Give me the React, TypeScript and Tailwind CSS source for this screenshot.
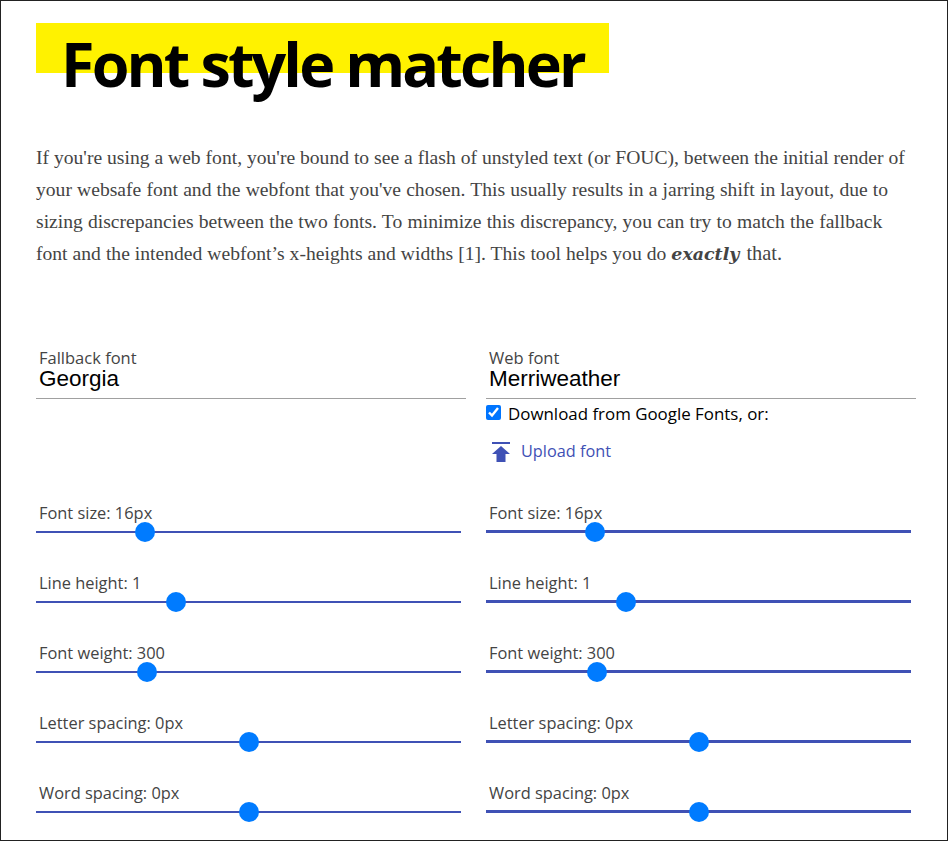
const sans = "font-['Open_Sans','Noto_Sans',sans-serif]";

const Slider = ({ label, thumb, thick }: { label: string; thumb: number; thick?: boolean }) => (
    <div className="h-[70px] w-[425px]">
        <div className={`${sans} h-[25px] pl-[3px] text-[16.4px] leading-[14px] text-[#444444]`}>{label}</div>
        <div className={`relative ${thick ? "mt-[-1px] h-[3px]" : "h-[2px]"} bg-[#3f51b5]`}>
            <div
                className={`absolute ${thick ? "top-[-8.5px]" : "top-[-9px]"} h-[20px] w-[20px] rounded-full bg-[#007bff]`}
                style={{ left: thumb }}
            />
        </div>
    </div>
)

const FontName = ({ label, value }: { label: string; value: string }) => (
    <div className="h-[51px] border-b border-[#a0a0a0] pl-[3px] pt-[1px]">
        <div className={`${sans} h-[18px] text-[16.5px] leading-[18px] text-[#444444]`}>{label}</div>
        <div className="font-['Liberation_Sans',sans-serif] text-[22.5px] leading-[24px] text-black">{value}</div>
    </div>
)

export default function App() {
    return (
        <div className="h-[841px] w-[948px] overflow-hidden border border-[#222222] bg-white pl-[35px] pt-[22px]">
            <div className="h-[50px] w-[573px] bg-[#fff200]">
                <h1 className={`${sans} pl-[25px] text-[61px] font-bold leading-[82px] tracking-[-2.85px] text-black`}>Font style matcher</h1>
            </div>
            <p className="mt-[69px] w-[900px] font-['Liberation_Serif',serif] text-[19.6px] leading-[32px] text-[#444444]">
                <span className="[word-spacing:0.02px]">If you're using a web font, you're bound to see a flash of unstyled text (or FOUC), between the initial render of</span><br />
                <span className="[word-spacing:0.26px]">your websafe font and the webfont that you've chosen. This usually results in a jarring shift in layout, due to</span><br />
                <span className="[word-spacing:0.3px]">sizing discrepancies between the two fonts. To minimize this discrepancy, you can try to match the fallback</span><br />
                <span className="[word-spacing:0.12px]">font and the intended webfont’s x-heights and widths [1]. This tool helps you do <b className="mr-[2px] font-['DejaVu_Serif',serif] text-[17.4px] italic leading-[16px]">exactly</b> <span className="text-[20.4px] leading-[16px]">that.</span></span>
            </p>
            <div className="mt-[78px] flex gap-[20px]">
                <div className="w-[430px]">
                    <FontName label="Fallback font" value="Georgia" />
                    <div className="h-[107px]" />
                    <Slider label="Font size: 16px" thumb={99} />
                    <Slider label="Line height: 1" thumb={130} />
                    <Slider label="Font weight: 300" thumb={101} />
                    <Slider label="Letter spacing: 0px" thumb={203} />
                    <Slider label="Word spacing: 0px" thumb={203} />
                </div>
                <div className="w-[430px]">
                    <FontName label="Web font" value="Merriweather" />
                    <div className="flex h-[30px] items-center gap-[7px]">
                        <input type="checkbox" defaultChecked className="mb-[3px] h-[15px] w-[15px]" />
                        <span className={`${sans} text-[16.9px] text-black`}>Download from Google Fonts, or:</span>
                    </div>
                    <div className="flex h-[44px] items-center gap-[11px] pl-[6px]">
                        <svg width="18" height="20" viewBox="0 0 18 20" fill="#3f51b5" className="mt-[2px]">
                            <rect x="0" y="0" width="18" height="2" />
                            <path d="M9 4 L18 12 H13.5 V20 H4.5 V12 H0 Z" />
                        </svg>
                        <span className={`${sans} text-[16.3px] text-[#3f51b5]`}>Upload font</span>
                    </div>
                    <div className="h-[33px]" />
                    <Slider label="Font size: 16px" thumb={99} thick />
                    <Slider label="Line height: 1" thumb={130} thick />
                    <Slider label="Font weight: 300" thumb={101} thick />
                    <Slider label="Letter spacing: 0px" thumb={203} thick />
                    <Slider label="Word spacing: 0px" thumb={203} thick />
                </div>
            </div>
        </div>
    )
}
